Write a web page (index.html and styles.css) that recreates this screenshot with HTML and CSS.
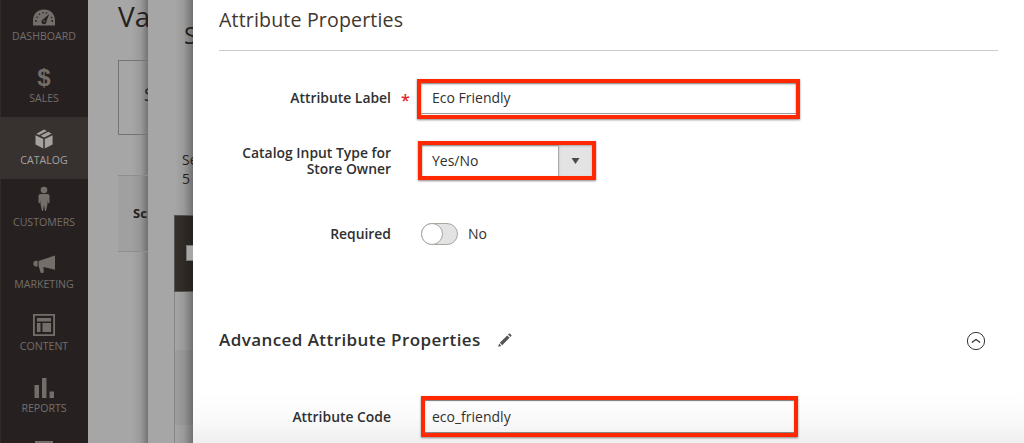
FILE: index.html
```html
<!DOCTYPE html>
<html lang="en">
<head>
<meta charset="utf-8">
<title>Attribute Properties</title>
<link rel="stylesheet" href="styles.css">
</head>
<body>
<nav class="menu">
  <a class="item"><svg class="icon" viewBox="0 0 22 22"><path fill="currentColor" d="M0 18.500v-5C0 7 4.500 2.500 11 2.500S22 7 22 13.500v5z"/><g fill="#262120"><circle cx="3" cy="14" r=".9"/><circle cx="4" cy="10.300" r=".8"/><circle cx="6.500" cy="7.200" r=".8"/><circle cx="10" cy="5.700" r=".8"/><circle cx="13.500" cy="6" r=".8"/><circle cx="18.600" cy="10.500" r=".8"/><circle cx="19.200" cy="14" r=".9"/><path d="M16.200 7 13.400 14.500a2.500 2.500 0 1 1-3.400-2z"/></g><circle cx="11.200" cy="14.300" r=".8" fill="currentColor"/></svg><span>DASHBOARD</span></a>
  <a class="item"><b class="icon dollar">$</b><span>SALES</span></a>
  <a class="item active"><svg class="icon" viewBox="0 0 22 22"><g fill="currentColor" transform="translate(.6 .8) scale(.95)"><path d="m11 .8 3 1.500-8.300 4.200L3 5.200zM15.400 3l3.600 2.200-8 4-3.600-1.900zM2 6.800l8.200 4v10L2 16.500zM20 6.800l-8.200 4v10l8.200-4.300z"/></g></svg><span>CATALOG</span></a>
  <a class="item"><svg class="icon person" viewBox="0 0 22 26"><g fill="currentColor"><circle cx="11" cy="4" r="3.300"/><path d="M7.500 8h7c1.300 0 2 .8 2 2v6.500c0 1-1.500 1-1.700 0L14.500 14v4l-1.500 7h-1l-1-6-1 6H9l-1.500-7v-4l-.3 2.500c-.2 1-1.700 1-1.700 0V10c0-1.200.7-2 2-2z"/></g></svg><span>CUSTOMERS</span></a>
  <a class="item"><svg class="icon" viewBox="0 0 22 22"><path fill="currentColor" d="M22 3.500v14.300L10.500 15l.3 5.800-3 .3L5.600 14l-.1-5zM4.500 8.700v5.800H2.200L.5 13v-3l1.700-1.300z"/></svg><span>MARKETING</span></a>
  <a class="item"><svg class="icon" viewBox="0 0 22 22"><path fill="none" stroke="currentColor" stroke-width="1.800" d="M.9.900h20.200v20.200H.9z"/><path fill="currentColor" d="M4 4h14v3.500H4zM4 9h3.500v9H4zM9.500 9H18v9H9.500z"/></svg><span>CONTENT</span></a>
  <a class="item"><svg class="icon" viewBox="0 0 22 22"><path fill="currentColor" d="M1.500 9H6v13.500H1.500zM9 2h4.500v20H9zM16.500 15.500H21V22h-4.500z"/></svg><span>REPORTS</span></a>
  <a class="item"><svg class="icon" viewBox="0 0 22 22"><path fill="currentColor" d="M2 3h18v16H2z"/></svg></a>
</nav>
<section class="page">
  <h1>Va</h1>
  <div class="scope">S</div>
  <div class="store">Sc</div>
</section>
<section class="panel">
  <h2>S</h2>
  <p>Se<br>5</p>
  <div class="table"><div class="head"><i></i></div><div class="row"></div><div class="row alt"></div><div class="row"></div></div>
</section>
<main class="modal">
  <h3>Attribute Properties</h3>
  <div class="field first"><label>Attribute Label</label><em>*</em><div class="mark label-mark"><div class="input">Eco Friendly</div></div></div>
  <div class="field second"><label>Catalog Input Type for Store Owner</label><div class="mark select-mark"><div class="input">Yes/No</div><div class="arrow"><svg width="9" height="6"><path fill="#514943" d="M.5 0h8l-4 6z"/></svg></div></div></div>
  <div class="field third"><label>Required</label><div class="toggle"><i></i></div><span>No</span></div>
  <header class="section"><h4>Advanced Attribute Properties</h4><svg class="pencil" width="14" height="14" viewBox="0 0 14 14"><path fill="#555" d="m.2 13.800.9-3.200 2.300 2.300zM1.800 9.800l7.400-7.400 2.400 2.400-7.400 7.400zM10 1.600l.9-.9q.6-.5 1.200 0l1.200 1.200q.5.600 0 1.200l-.9.900z"/></svg><svg class="collapse" width="20" height="20" viewBox="0 0 20 20" fill="none" stroke="#333"><circle cx="10" cy="10" r="8.600" stroke-width="1"/><path stroke-width="1.200" d="m5.800 11.500 4.200-3 4.200 3"/></svg></header>
  <div class="field fourth"><label>Attribute Code</label><div class="mark code-mark"><div class="input">eco_friendly</div></div></div>
</main>
</body>
</html>
```
FILE: styles.css
```css
* { box-sizing: border-box; }
body { margin: 0; height: 443px; display: flex; overflow: hidden; background: #fff; font-family: "Open Sans", "Noto Sans", sans-serif; color: #303030; }
h1, h2, h3, h4, p { margin: 0; font-weight: 400; }
.menu { flex: 0 0 88px; height: 443px; overflow: hidden; background: #262120; color: #736e6a; box-shadow: inset 1px 0 #302b29; }
.item { display: flex; flex-direction: column; align-items: center; height: 62px; padding-top: 11px; font-size: 10.6px; line-height: 14px; }
.item:first-child { margin-top: -7px; padding-top: 14px; }
.item:first-child span { margin-top: 0; }
.item span { margin-top: 3px; }
.icon { display: block; width: 22px; height: 22px; flex: none; }
.dollar { font: 700 24px/24px "Liberation Sans", sans-serif; text-align: center; }
.person { height: 26px; margin: -4px 0 0; }
.active { background: #37322f; color: #a5a19e; }
.page { flex: 0 0 60px; overflow: hidden; padding-left: 30px; background: linear-gradient(to right, transparent 44px, rgba(0,0,0,.08) 53px, rgba(0,0,0,.3)), #a6a6a6; color: #251e1b; white-space: nowrap; }
.page h1 { font-size: 28px; line-height: 36px; margin-top: -2px; }
.scope { margin-top: 26px; height: 75px; width: 100px; border: 1px solid #747474; padding: 22px 0 0 25px; font-size: 19px; line-height: 22px; }
.store { margin-top: 40px; height: 77px; border: solid #8e8e8e; border-width: 1px 0; padding: 28px 0 0 15px; background: rgba(0,0,0,.03); font-weight: 700; font-size: 13px; line-height: 18px; }
.panel { flex: 0 0 45px; overflow: hidden; background: linear-gradient(to right, transparent 27px, rgba(0,0,0,.08) 36px, rgba(0,0,0,.32)), #a6a6a6; color: #251e1b; white-space: nowrap; }
.panel h2 { font-size: 24px; line-height: 32px; padding: 19px 0 0 36px; }
.panel p { padding: 99px 0 0 34px; font-size: 14px; line-height: 19px; }
.table { margin: 27px 0 0 26px; border-left: 1px solid #858585; }
.head { height: 77px; margin-left: -1px; background: linear-gradient(to right, #37312c, #25211d); border: 1px solid #55504b; border-right: 0; padding: 29px 0 0 11px; }
.head i { display: block; width: 16px; height: 16px; background: #a6a6a6; border: 1px solid #777; }
.row { height: 58px; }
.row.alt { height: 75px; background: rgba(0,0,0,.04); }
.modal { flex: 1; min-width: 0; height: 443px; overflow: hidden; padding: 0 26px; background: linear-gradient(#fff 390px, #fafafa 418px, #efefef 443px); }
.modal h3 { height: 51px; padding-top: 6px; border-bottom: 1px solid #ccc; color: #41362f; font-size: 19.600px; letter-spacing: .15px; line-height: 27px; }
.field { display: grid; grid-template-columns: 172px 26px 1fr; align-items: center; font-size: 14px; }
.field label { grid-column: 1; text-align: right; font-weight: 600; font-size: 13.900px; line-height: 16px; }
.field em { grid-column: 2; padding: 1px 0 0 10px; color: #e22626; font-style: normal; font-weight: 600; font-size: 16px; line-height: 18px; }
.mark { grid-column: 3; display: flex; height: 40px; border: 4px solid #ff2800; box-shadow: 0 1px 2px #888, inset 0 1px 2px #777; }
.input { flex: 1; padding-left: 11px; line-height: 29px; }
.first { margin-top: 28px; }
.first label { margin-top: -2px; }
.label-mark { width: 383px; }
.label-mark .input { border-bottom: 1px solid #999; margin-bottom: 1px; }
.second { margin-top: 22px; }
.second label { padding-left: 18px; }
.select-mark { width: 178px; height: 39px; margin-left: 1px; }
.select-mark .input { line-height: 31px; padding-left: 10px; }
.arrow { width: 34px; display: grid; place-items: center; background: #e3e3e3; border-left: 1px solid #aaa; box-shadow: inset 0 1px 2px #aaa; }
.third { grid-template-columns: 172px 30px 37px 1fr; margin-top: 43px; }
.toggle { grid-column: 3; height: 22px; border: 1px solid #aaa6a0; border-radius: 11px; background: #e3e3e3; }
.toggle i { display: block; width: 22px; height: 22px; margin: -1px; border: 1px solid #aaa6a0; border-radius: 50%; background: #fff; }
.third span { padding-left: 10px; margin-top: -2px; }
.section { height: 26px; margin-top: 82px; display: flex; align-items: center; }
.section h4 { font-size: 17px; font-weight: 600; letter-spacing: .43px; line-height: 26px; }
.pencil { margin-left: 17px; }
.collapse { margin: 2px 12px 0 auto; }
.fourth { margin-top: 43px; }
.code-mark { width: 377px; height: 41px; margin-left: 4px; box-shadow: 0 1px 2px #888, inset 0 1px 1px #777, inset 0 -1px #888; }
.code-mark .input { padding-left: 7px; line-height: 33px; }
```
